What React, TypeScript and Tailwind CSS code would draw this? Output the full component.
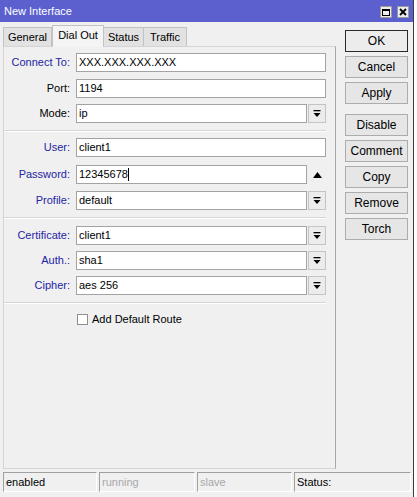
import React from "react";

const DropIcon = () => (
    <svg width="8" height="8" viewBox="0 0 8 8">
        <rect x="0.5" y="0" width="7" height="1.3" fill="#000" />
        <polygon points="0.5,3 7.5,3 4,7" fill="#000" />
    </svg>
);

interface FieldProps {
    label: string;
    value: string;
    blue?: boolean;
    dropdown?: boolean;
    extra?: React.ReactNode;
    cursor?: boolean;
    className?: string;
}

const Field: React.FC<FieldProps> = ({ label, value, blue, dropdown, extra, cursor, className }) => (
    <div className={`flex items-center h-[19px] ${className || ""}`}>
        <div className={`w-[67px] text-right pr-[1px] ${blue ? "text-[#2424a4]" : "text-black"}`}>{label}</div>
        <div
            className={`ml-[5px] h-[19px] bg-white border border-[#a3a3a3] flex items-center pl-[2px] ${dropdown || extra ? "w-[231px]" : "w-[250px]"}`}
        >
            <span>{value}</span>
            {cursor && <span className="inline-block w-[1px] h-[13px] bg-black" />}
        </div>
        {dropdown && (
            <div className="ml-[1px] w-[18px] h-[19px] border border-[#c4c4c4] bg-[#ececec] flex items-center justify-center">
                <DropIcon />
            </div>
        )}
        {extra}
    </div>
);

const Separator: React.FC<{ className?: string }> = ({ className }) => (
    <div className={`w-[322px] border-t border-[#d6d6d6] border-b border-b-white ${className || ""}`} />
);

const buttons = ["OK", "Cancel", "Apply", "Disable", "Comment", "Copy", "Remove", "Torch"];

export default function App() {
    return (
        <div className="w-[417px] h-[497px] bg-white flex font-['Liberation_Sans',Arial,sans-serif] text-[11px] text-black">
            <div className="w-[414px] h-full bg-[#f0f0f0] border-r border-[#3c3c3c] flex flex-col">
                {/* Titelbalk */}
                <div className="h-[22px] bg-[#5c60cf] flex items-center justify-between pl-[4px] pr-[4px]">
                    <span className="text-white text-[11px]">New Interface</span>
                    <div className="flex items-center gap-[5px] mt-[2px]">
                        <div className="w-[12px] h-[12px] bg-[#ececec] border border-[#9a9a9a] flex items-center justify-center">
                            <div className="w-[8px] h-[7px] border border-black border-t-2" />
                        </div>
                        <div className="w-[12px] h-[12px] bg-[#ececec] border border-[#9a9a9a] flex items-center justify-center">
                            <svg width="8" height="8" viewBox="0 0 8 8">
                                <path d="M1 1 L7 7 M7 1 L1 7" stroke="#000" strokeWidth="1.8" />
                            </svg>
                        </div>
                    </div>
                </div>

                <div className="flex flex-1 pt-[2px]">
                    {/* Tabs + paneel */}
                    <div className="ml-[3px] w-[333px] flex flex-col">
                        <div className="h-[22px] flex items-end">
                            <div className="w-[49px] h-[19px] bg-[#e2e2e2] border border-b-0 border-[#c2c2c2] flex items-center justify-center">General</div>
                            <div className="w-[52px] h-[22px] bg-[#f4f4f4] border border-b-0 border-[#c2c2c2] flex items-center justify-center pb-[2px] relative z-10 -mb-[1px]">Dial Out</div>
                            <div className="w-[40px] h-[19px] bg-[#e2e2e2] border border-b-0 border-l-0 border-[#c2c2c2] flex items-center justify-center">Status</div>
                            <div className="w-[43px] h-[19px] bg-[#e2e2e2] border border-b-0 border-l-0 border-[#c2c2c2] flex items-center justify-center">Traffic</div>
                        </div>
                        <div className="h-[423px] border border-[#d4d4d4] border-r-[#a8a8a8] bg-[#f0f0f0] pt-[6px] flex flex-col">
                            <Field label="Connect To:" value="XXX.XXX.XXX.XXX" blue />
                            <Field label="Port:" value="1194" className="mt-[7px]" />
                            <Field label="Mode:" value="ip" dropdown className="mt-[6px]" />
                            <Separator className="mt-[7px]" />
                            <Field label="User:" value="client1" blue className="mt-[6px]" />
                            <Field
                                label="Password:"
                                value="12345678"
                                blue
                                cursor
                                className="mt-[8px]"
                                extra={
                                    <svg width="9" height="6" viewBox="0 0 9 6" className="ml-[6px]">
                                        <polygon points="0,6 9,6 4.5,0" fill="#000" />
                                    </svg>
                                }
                            />
                            <Field label="Profile:" value="default" blue dropdown className="mt-[7px]" />
                            <Separator className="mt-[7px]" />
                            <Field label="Certificate:" value="client1" blue dropdown className="mt-[7px]" />
                            <Field label="Auth.:" value="sha1" blue dropdown className="mt-[6px]" />
                            <Field label="Cipher:" value="aes 256" blue dropdown className="mt-[6px]" />
                            <Separator className="mt-[7px]" />
                            <div className="flex items-center mt-[7px] ml-[73px]">
                                <div className="w-[11px] h-[11px] bg-white border border-[#8f8f8f]" />
                                <span className="ml-[4px]">Add Default Route</span>
                            </div>
                        </div>
                    </div>

                    {/* Knoppen */}
                    <div className="ml-[9px] w-[63px] mt-[6px] flex flex-col">
                        {buttons.map((b, i) => (
                            <div
                                key={b}
                                className={`h-[22px] flex items-center justify-center text-[12px] ${
                                    i === 0 ? "border border-[#2a2a2a] bg-[#ececec]" : "border border-[#acacac] bg-[#e6e6e6]"
                                } ${i === 0 ? "" : i === 3 ? "mt-[10px]" : "mt-[4px]"}`}
                            >
                                {b}
                            </div>
                        ))}
                    </div>
                </div>

                {/* Statusbalk */}
                <div className="h-[20px] mt-[3px] mb-[5px] ml-[3px] flex gap-[2px]">
                    <div className="w-[94px] border border-[#a0a0a0] border-r-white border-b-white flex items-center pl-[2px]">enabled</div>
                    <div className="w-[96px] border border-[#a0a0a0] border-r-white border-b-white flex items-center pl-[2px] text-[#a8a8a8]">running</div>
                    <div className="w-[95px] border border-[#a0a0a0] border-r-white border-b-white flex items-center pl-[2px] text-[#a8a8a8]">slave</div>
                    <div className="flex-1 mr-[2px] border border-[#a0a0a0] border-r-white border-b-white flex items-center pl-[2px]">Status:</div>
                </div>
            </div>
        </div>
    );
}
